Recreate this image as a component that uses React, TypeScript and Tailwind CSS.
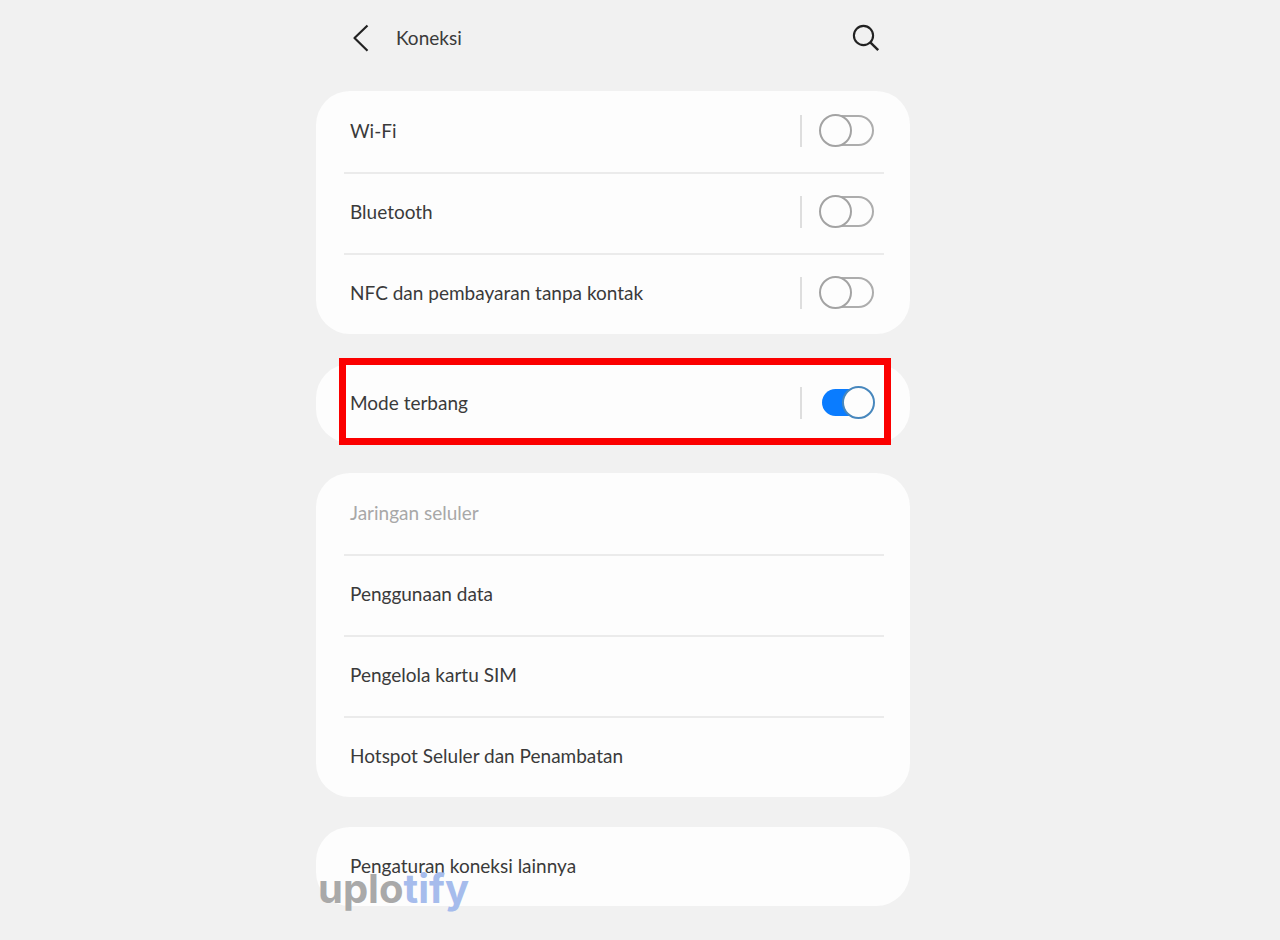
import { useState } from "react";
import type { ReactNode } from "react";

function Card({ children, overlay }: { children: ReactNode; overlay?: ReactNode }) {
  return (
    <section className="relative rounded-[34px] bg-[#fdfdfd] pl-7 pr-[26px]">
      <div>{children}</div>
      {overlay}
    </section>
  );
}

const ROW =
  "flex h-[81px] w-full items-center border-[#ebebeb] pb-0.5 pl-1.5 pr-2.5 text-left only:h-[79px] not-first:border-t-2 not-first:pb-1";

function ToggleRow({ id, label, initial = false }: { id: string; label: string; initial?: boolean }) {
  const [on, setOn] = useState(initial);
  return (
    <div className={ROW}>
      <label htmlFor={id} className="flex-1">
        {label}
      </label>
      <span className="mr-[18px] h-8 w-0.5 bg-[#dedede]" />
      <input
        id={id}
        type="checkbox"
        checked={on}
        onChange={() => setOn(!on)}
        className="relative h-[31px] w-[54px] shrink-0 cursor-pointer appearance-none rounded-full border-2 border-[#adadad] bg-[#fdfdfd] bg-clip-padding before:absolute before:-left-[3px] before:-top-[3px] before:size-[33px] before:rounded-full before:border-2 before:border-[#a3a3a3] before:bg-[#fdfdfd] checked:border-transparent checked:bg-[#0a7cff] checked:before:left-5 checked:before:border-[#4787bd]"
      />
    </div>
  );
}

function LinkRow({ label, disabled = false }: { label: string; disabled?: boolean }) {
  return (
    <button type="button" disabled={disabled} className={`${ROW} disabled:text-[#a8a8a8]`}>
      {label}
    </button>
  );
}

export default function App() {
  return (
    <div className="min-h-screen bg-[#f1f1f1] pr-[54px] font-['Lato',sans-serif] text-[19px] leading-7 text-[#3a3a3a]">
      <main className="mx-auto max-w-[594px]">
        <header className="flex h-[91px] items-start pl-[30px] pr-7 pt-[22px]">
          <button type="button" aria-label="Kembali" className="flex h-8 w-[50px] items-center">
            <svg viewBox="0 0 28 30" className="h-[30px] w-7" fill="none" stroke="#222222" strokeWidth="2.2">
              <path d="M21.5 2.5 8.5 15l13 12.7" strokeLinejoin="round" />
            </svg>
          </button>
          <h1 className="flex-1 leading-8">Koneksi</h1>
          <button type="button" aria-label="Cari" className="flex size-8 items-center justify-center">
            <svg viewBox="0 0 30 30" className="size-[30px]" fill="none" stroke="#222222" strokeWidth="2.1">
              <circle cx="12.5" cy="12.5" r="9.6" />
              <path d="m19.3 19.3 7.9 7.9" strokeWidth="2.4" />
            </svg>
          </button>
        </header>

        <div className="flex flex-col gap-[30px]">
          <Card>
            <ToggleRow id="wifi" label="Wi-Fi" />
            <ToggleRow id="bluetooth" label="Bluetooth" />
            <ToggleRow id="nfc" label="NFC dan pembayaran tanpa kontak" />
          </Card>
          <Card
            overlay={
              <div className="pointer-events-none absolute -bottom-0.5 -top-1.5 left-[23px] right-[19px] border-[7px] border-[#fb0000]" />
            }
          >
            <ToggleRow id="airplane" label="Mode terbang" initial />
          </Card>
          <Card>
            <LinkRow label="Jaringan seluler" disabled />
            <LinkRow label="Penggunaan data" />
            <LinkRow label="Pengelola kartu SIM" />
            <LinkRow label="Hotspot Seluler dan Penambatan" />
          </Card>
          <Card
            overlay={
              <p className="pointer-events-none absolute left-0.5 top-10 font-['Inter',sans-serif] text-[40px] font-bold leading-[44px] text-[#a9a9a9]">
                uplo<span className="text-[#a6bcec]">tify</span>
              </p>
            }
          >
            <LinkRow label="Pengaturan koneksi lainnya" />
          </Card>
        </div>
      </main>
    </div>
  );
}
